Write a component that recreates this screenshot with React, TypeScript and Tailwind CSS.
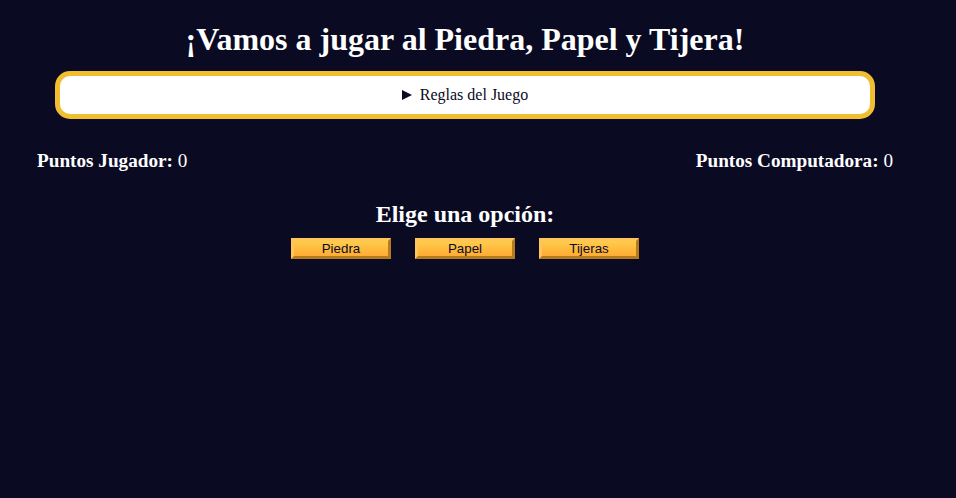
export default function App() {
  const options = ["Piedra", "Papel", "Tijeras"];

  return (
    <div className="min-h-screen w-full bg-[#0a0a23] text-white font-['Liberation_Serif',serif]">
      <div className="w-[930px] flex flex-col items-center">
        <h1 className="text-[32px] font-bold leading-[37px] mt-[21px] mb-[13px] text-center">
          ¡Vamos a jugar al Piedra, Papel y Tijera!
        </h1>

        <div className="w-[820px] py-[10px] rounded-[15px] border-[5px] border-[#f1be32] bg-white text-[#0a0a23] text-base leading-[18px] flex items-center justify-center">
          <svg width="10" height="10" viewBox="0 0 10 10" className="mr-[8px]">
            <path d="M0 0 L10 5 L0 10 Z" fill="#0a0a23" />
          </svg>
          Reglas del Juego
        </div>

        <div className="w-full flex justify-between px-[37px] mt-[31px] text-[19.2px] leading-[22px]">
          <p>
            <strong>Puntos Jugador:</strong> <span>0</span>
          </p>
          <p>
            <strong>Puntos Computadora:</strong> <span>0</span>
          </p>
        </div>

        <h2 className="text-[24px] font-bold leading-[28px] mt-[28px]">Elige una opción:</h2>

        <div className="flex gap-[24px] mt-[10px]">
          {options.map((o) => (
            <button
              key={o}
              className="w-[100px] h-[21px] border-[3px] border-t-[#ffc45a] border-l-[#ffc45a] border-r-[#b77a1e] border-b-[#b77a1e] bg-[#feac32] bg-[linear-gradient(#fecc4c,#ffac33)] text-[#0a0a23] text-[13.33px] leading-[13px] font-['Liberation_Sans',sans-serif] cursor-pointer"
            >
              {o}
            </button>
          ))}
        </div>
      </div>
    </div>
  );
}
